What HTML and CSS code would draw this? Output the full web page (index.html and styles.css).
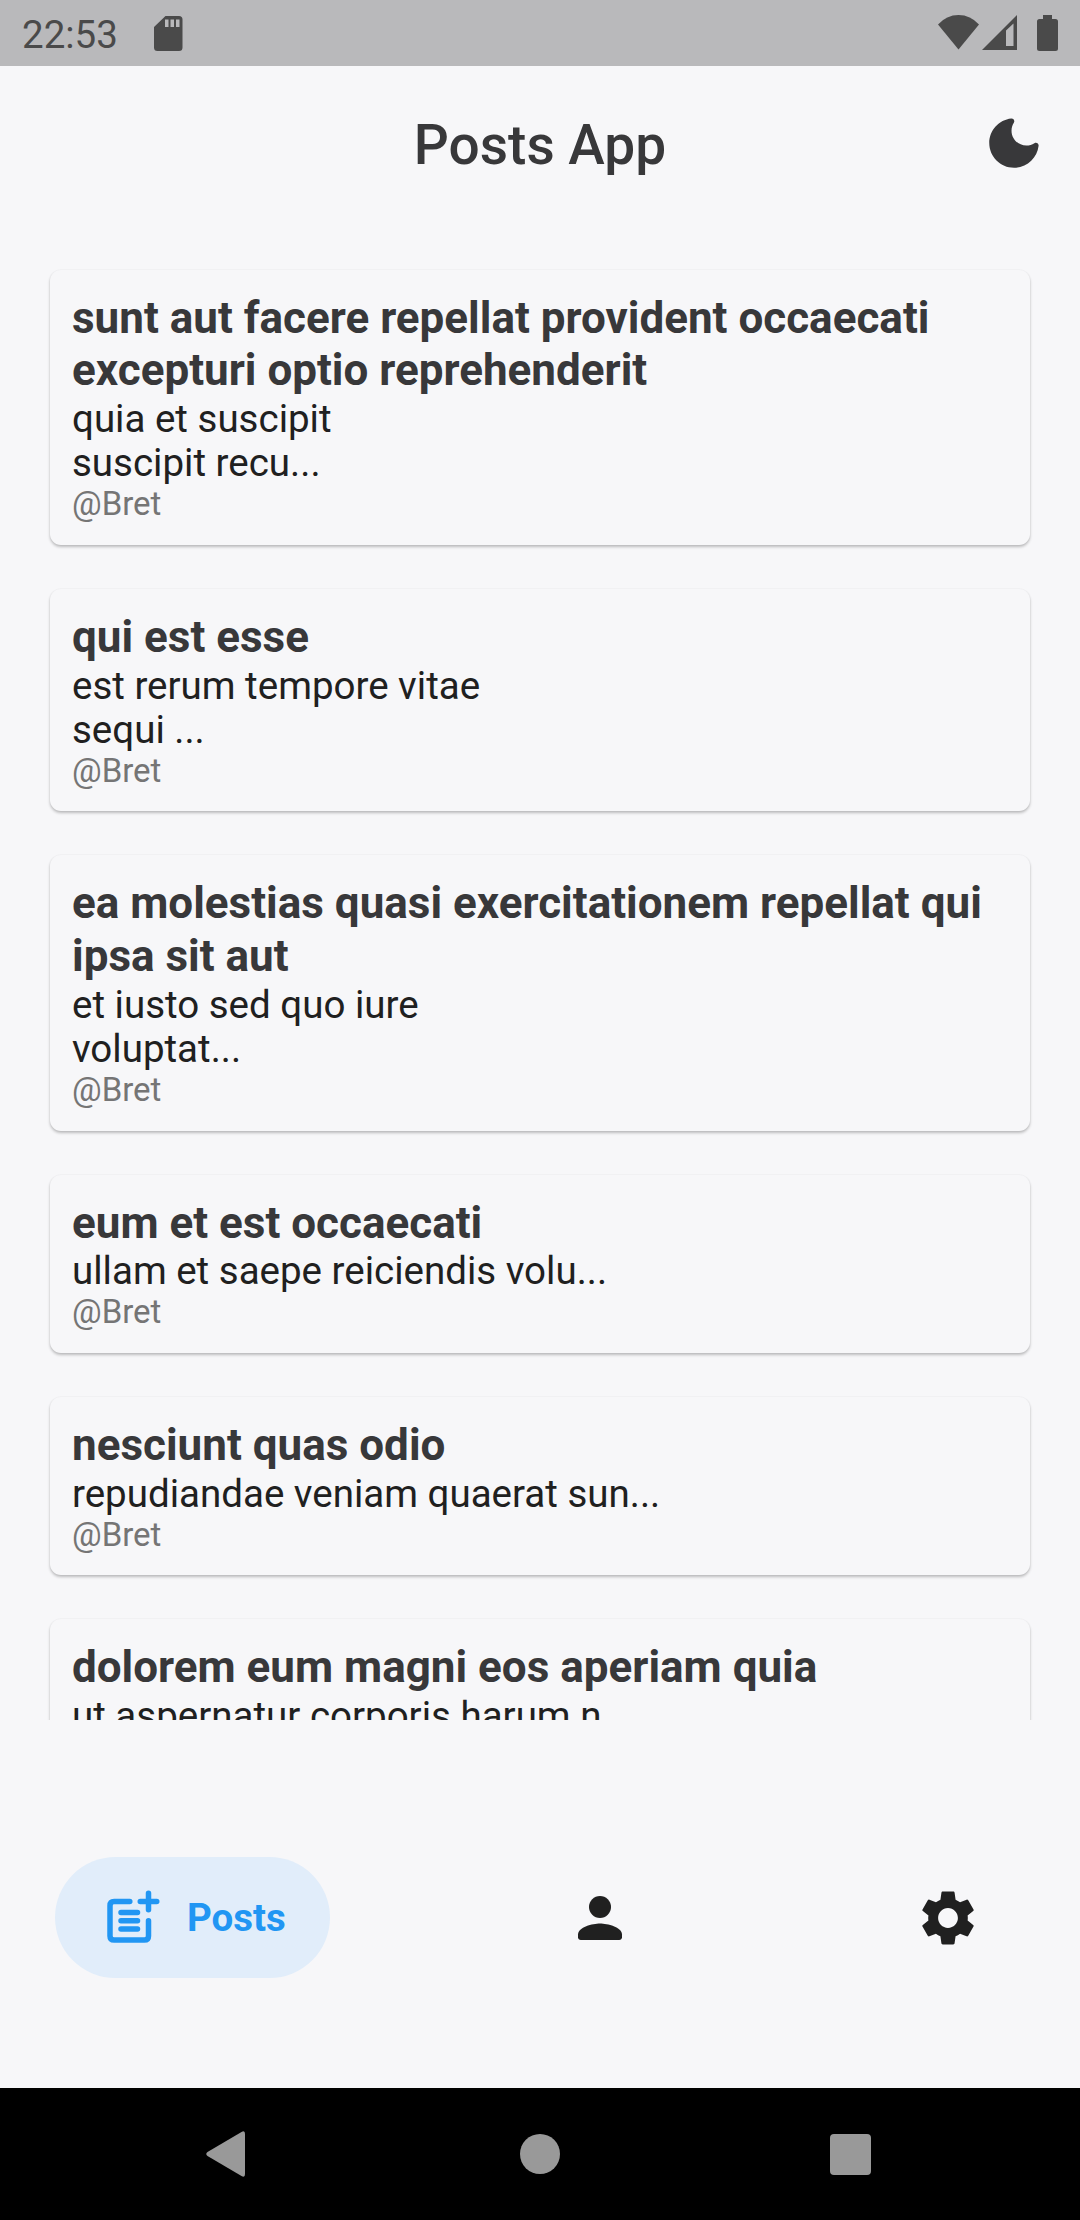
FILE: index.html
```html
<!DOCTYPE html>
<html lang="en">
<head>
<meta charset="utf-8">
<title>Posts App</title>
<link rel="stylesheet" href="styles.css">
</head>
<body>
<div class="screen">
  <div class="status">
    <span class="clock">22:53</span>
    <svg class="sd" width="29" height="35" viewBox="0 0 29 35"><path fill-rule="evenodd" d="M11.5 0H25Q28.500 0 28.500 3.500V31.500Q28.500 35 25 35H3.500Q0 35 0 31.500V11ZM11 3.500V11h3.500V3.500ZM16.500 3.500V11H20V3.500ZM22 3.500V11h3.500V3.500Z"/></svg>
    <div class="indicators">
      <svg width="41" height="35" viewBox="0 0 41 35"><path d="M0 9.500Q8.500 0 20.500 0T41 9.500L20.500 34.500Z"/></svg>
      <svg class="signal" width="35" height="35" viewBox="0 0 35 35"><path fill-rule="evenodd" d="M0 35 35 0V35ZM24 15.500V31h7.500V8.500Z"/></svg>
      <svg class="battery" width="21" height="36" viewBox="0 0 21 36"><path d="M6 0h9v4h3.500Q21 4 21 6.500v27Q21 36 18.500 36h-16Q0 36 0 33.500v-27Q0 4 2.500 4H6Z"/></svg>
    </div>
  </div>
  <header class="appbar">
    <h1>Posts App</h1>
    <svg class="icon" viewBox="0 0 24 24"><path d="M11.010 3.050C6.510 3.540 3 7.360 3 12c0 4.970 4.030 9 9 9 4.630 0 8.450-3.500 8.950-8 .09-.79-.78-1.420-1.540-.95-.84.54-1.840.85-2.910.85-2.980 0-5.400-2.420-5.400-5.400 0-1.060.31-2.060.84-2.890.45-.67-.04-1.630-.93-1.560z"/></svg>
  </header>
  <main class="list">
    <article class="card"><h2>sunt aut facere repellat provident occaecati excepturi optio reprehenderit</h2><p>quia et suscipit<br>suscipit recu...</p><span class="author">@Bret</span></article>
    <article class="card"><h2>qui est esse</h2><p>est rerum tempore vitae<br>sequi ...</p><span class="author">@Bret</span></article>
    <article class="card"><h2>ea molestias quasi exercitationem repellat qui ipsa sit aut</h2><p>et iusto sed quo iure<br>voluptat...</p><span class="author">@Bret</span></article>
    <article class="card"><h2>eum et est occaecati</h2><p>ullam et saepe reiciendis volu...</p><span class="author">@Bret</span></article>
    <article class="card"><h2>nesciunt quas odio</h2><p>repudiandae veniam quaerat sun...</p><span class="author">@Bret</span></article>
    <article class="card"><h2>dolorem eum magni eos aperiam quia</h2><p>ut aspernatur corporis harum n...</p></article>
  </main>
  <nav class="tabs">
    <div class="tab active">
      <svg class="icon line" viewBox="0 0 24 24"><path d="M11.200 6H5.500Q4 6 4 7.500v11Q4 20 5.500 20h11q1.500 0 1.500-1.500V13M8 10h6M8 13h6M8 16h6M18 3v6M15 6h6"/></svg>
      <span>Posts</span>
    </div>
    <div class="tab"><svg class="icon" viewBox="0 0 24 24"><circle cx="12" cy="8" r="4"/><path d="M12 14c-2.670 0-8 1.340-8 4v1c0 .55.45 1 1 1h14c.55 0 1-.45 1-1v-1c0-2.660-5.330-4-8-4z"/></svg></div>
    <div class="tab"><svg class="icon" viewBox="0 0 24 24"><path d="M19.140,12.940c0.040-0.300,0.060-0.610,0.060-0.940c0-0.320-0.020-0.640-0.070-0.940l2.030-1.580c0.180-0.140,0.230-0.410,0.120-0.610l-1.920-3.320c-0.120-0.220-0.370-0.290-0.590-0.220l-2.390,0.960c-0.500-0.380-1.030-0.700-1.620-0.940L14.400,2.810c-0.040-0.240-0.240-0.410-0.480-0.410h-3.840c-0.240,0-0.430,0.170-0.470,0.410L9.250,5.350C8.660,5.590,8.120,5.920,7.630,6.290L5.240,5.330c-0.220-0.080-0.470,0-0.590,0.220L2.740,8.870C2.620,9.080,2.660,9.340,2.860,9.480l2.030,1.580C4.840,11.360,4.800,11.690,4.800,12s0.020,0.640,0.070,0.940l-2.030,1.580c-0.180,0.140-0.230,0.410-0.120,0.610l1.920,3.320c0.120,0.220,0.370,0.290,0.590,0.220l2.390-0.960c0.500,0.380,1.030,0.700,1.620,0.940l0.360,2.540c0.050,0.240,0.240,0.410,0.480,0.410h3.840c0.240,0,0.440-0.170,0.470-0.410l0.360-2.540c0.590-0.240,1.130-0.560,1.620-0.940l2.390,0.960c0.220,0.080,0.470,0,0.590-0.220l1.920-3.320c0.120-0.220,0.070-0.470-0.120-0.610L19.140,12.940z M12,15.600c-1.980,0-3.600-1.620-3.600-3.600s1.620-3.600,3.600-3.600s3.600,1.620,3.600,3.600S13.980,15.600,12,15.600z"/></svg></div>
  </nav>
  <div class="system">
    <svg width="44" height="46" viewBox="0 0 44 46"><path d="M35.500 1Q39 -1 39 3V43Q39 47 35.500 45L1.500 25Q-1 23 1.500 21Z"/></svg>
    <svg width="40" height="40" viewBox="0 0 40 40"><circle cx="20" cy="20" r="20"/></svg>
    <svg width="41" height="41" viewBox="0 0 41 41"><rect width="41" height="41" rx="4"/></svg>
  </div>
</div>
</body>
</html>
```
FILE: styles.css
```css
* { box-sizing: border-box; margin: 0; }
body { background: #f7f7f9; font-family: Roboto, sans-serif; }
svg { display: block; flex: none; fill: currentColor; }

.screen {
  display: flex;
  flex-direction: column;
  width: 1080px;
  height: 2220px;
  overflow: hidden;
}

.status {
  display: flex;
  align-items: flex-start;
  height: 66px;
  padding: 0 22px;
  background: #b9b9bb;
  color: #4a4a4a;
}
.clock { width: 132px; padding-top: 12px; font-size: 38.5px; line-height: 45px; }
.sd { margin-top: 16px; }
.indicators { display: flex; margin-left: auto; padding-top: 15px; }
.signal { margin-left: 3px; }
.battery { margin-left: 20px; }

.appbar {
  display: grid;
  grid-template-columns: 66px 1fr 66px;
  align-items: center;
  height: 154px;
  padding: 0 33px;
  color: #38383a;
}
.appbar h1 {
  grid-column: 2;
  padding-top: 4px;
  text-align: center;
  font-size: 55px;
  font-weight: 500;
  line-height: 64px;
}
.icon { width: 66px; height: 66px; }

.list {
  display: flex;
  flex-direction: column;
  gap: 44px;
  height: 1500px;
  padding: 49.7px 50px 0;
  overflow: hidden;
}
.card {
  flex: none;
  padding: 22px;
  border-radius: 11px;
  background: #f7f7f9;
  box-shadow: 0 2px 3px rgba(0, 0, 0, .24), 0 0 1px 1px rgba(0, 0, 0, .02);
}
.card h2 { color: #38383a; font-size: 44px; font-weight: 700; line-height: 52.8px; }
.card p { color: #202020; font-size: 38.5px; line-height: 44px; }
.author { display: block; color: #757575; font-size: 33px; line-height: 38px; margin-bottom: -.4px; }

.tabs {
  display: flex;
  justify-content: space-between;
  align-items: flex-start;
  height: 368px;
  padding: 137px 55px 0;
  color: #202020;
}
.tab { display: flex; align-items: center; gap: 22px; height: 121px; padding: 0 44px; }
.tab.active {
  border-radius: 61px;
  background: #e1edfa;
  color: #2196f3;
  font-size: 38.5px;
  font-weight: 700;
}
.line { fill: none; stroke: currentColor; stroke-width: 2; stroke-linecap: round; }

.system {
  display: flex;
  justify-content: space-between;
  align-items: center;
  height: 132px;
  padding: 0 209px 0 206px;
  background: #000;
  color: #999;
}
```
